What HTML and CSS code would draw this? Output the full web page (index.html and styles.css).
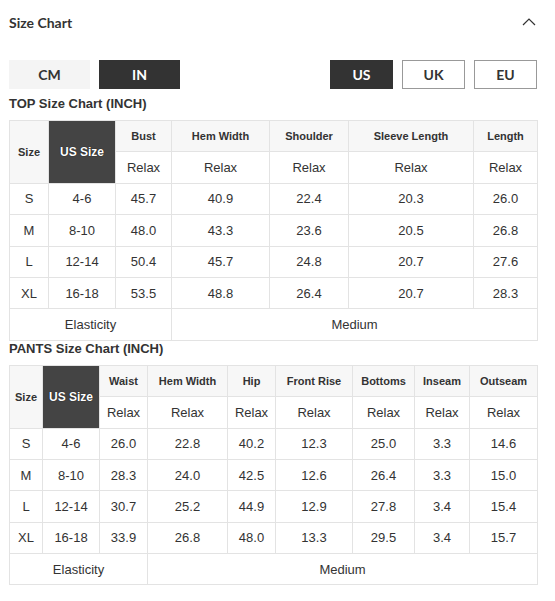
FILE: index.html
```html
<!DOCTYPE html>
<html lang="en">
<head>
    <meta charset="UTF-8">
    <meta name="viewport" content="width=device-width, initial-scale=1.0">
    <title>Size Chart</title>
    <link rel="stylesheet" href="styles.css">
</head>
<body>

<div class="size-chart">
    <div class="chart-header">
        <span class="chart-heading">Size Chart</span>
        <svg class="chevron" width="14" height="8" viewBox="0 0 14 8">
            <polyline points="1,7 7,1 13,7" fill="none" stroke="#333" stroke-width="1.2"/>
        </svg>
    </div>

    <div class="switches">
        <div class="switch-group">
            <button class="unit-btn">CM</button>
            <button class="unit-btn active">IN</button>
        </div>
        <div class="switch-group">
            <button class="region-btn active">US</button>
            <button class="region-btn">UK</button>
            <button class="region-btn">EU</button>
        </div>
    </div>

    <div class="chart-title">TOP Size Chart (INCH)</div>
    <table class="size-table">
        <colgroup>
            <col style="width: 39px"><col style="width: 67px"><col style="width: 56px"><col style="width: 98px">
            <col style="width: 79px"><col style="width: 125px"><col style="width: 64px">
        </colgroup>
        <tr class="head">
            <th rowspan="2">Size</th>
            <th rowspan="2" class="region-head">US Size</th>
            <th>Bust</th>
            <th>Hem Width</th>
            <th>Shoulder</th>
            <th>Sleeve Length</th>
            <th>Length</th>
        </tr>
        <tr>
            <td>Relax</td><td>Relax</td><td>Relax</td><td>Relax</td><td>Relax</td>
        </tr>
        <tr><td>S</td><td>4-6</td><td>45.7</td><td>40.9</td><td>22.4</td><td>20.3</td><td>26.0</td></tr>
        <tr><td>M</td><td>8-10</td><td>48.0</td><td>43.3</td><td>23.6</td><td>20.5</td><td>26.8</td></tr>
        <tr><td>L</td><td>12-14</td><td>50.4</td><td>45.7</td><td>24.8</td><td>20.7</td><td>27.6</td></tr>
        <tr><td>XL</td><td>16-18</td><td>53.5</td><td>48.8</td><td>26.4</td><td>20.7</td><td>28.3</td></tr>
        <tr><td colspan="3">Elasticity</td><td colspan="4">Medium</td></tr>
    </table>

    <div class="chart-title">PANTS Size Chart (INCH)</div>
    <table class="size-table">
        <colgroup>
            <col style="width: 33px"><col style="width: 57px"><col style="width: 48px"><col style="width: 80px">
            <col style="width: 48px"><col style="width: 77px"><col style="width: 62px"><col style="width: 55px">
            <col style="width: 68px">
        </colgroup>
        <tr class="head">
            <th rowspan="2">Size</th>
            <th rowspan="2" class="region-head">US Size</th>
            <th>Waist</th>
            <th>Hem Width</th>
            <th>Hip</th>
            <th>Front Rise</th>
            <th>Bottoms</th>
            <th>Inseam</th>
            <th>Outseam</th>
        </tr>
        <tr>
            <td>Relax</td><td>Relax</td><td>Relax</td><td>Relax</td><td>Relax</td><td>Relax</td><td>Relax</td>
        </tr>
        <tr><td>S</td><td>4-6</td><td>26.0</td><td>22.8</td><td>40.2</td><td>12.3</td><td>25.0</td><td>3.3</td><td>14.6</td></tr>
        <tr><td>M</td><td>8-10</td><td>28.3</td><td>24.0</td><td>42.5</td><td>12.6</td><td>26.4</td><td>3.3</td><td>15.0</td></tr>
        <tr><td>L</td><td>12-14</td><td>30.7</td><td>25.2</td><td>44.9</td><td>12.9</td><td>27.8</td><td>3.4</td><td>15.4</td></tr>
        <tr><td>XL</td><td>16-18</td><td>33.9</td><td>26.8</td><td>48.0</td><td>13.3</td><td>29.5</td><td>3.4</td><td>15.7</td></tr>
        <tr><td colspan="3">Elasticity</td><td colspan="6">Medium</td></tr>
    </table>
</div>

</body>
</html>
```

FILE: styles.css
```css
body {
    margin: 0;
    font-family: "Liberation Sans", Arial, sans-serif;
    color: #333;
    background-color: #fff;
}

.size-chart {
    width: 528px;
    margin-left: 9px;
}

.chart-header {
    display: flex;
    justify-content: space-between;
    align-items: center;
    height: 45px;
}

.chart-heading {
    font-family: Lato, sans-serif;
    font-size: 14px;
    font-weight: 700;
    color: #333;
}

.chevron {
    display: block;
    margin-right: 1px;
    margin-top: -2px;
}

.switches {
    display: flex;
    justify-content: space-between;
    margin-top: 15px;
    margin-bottom: 7px;
}

.switch-group {
    display: flex;
    gap: 9px;
}

.switches button {
    height: 29px;
    padding: 0;
    font-family: Lato, sans-serif;
    font-size: 14px;
    font-weight: 700;
    color: #333;
    cursor: pointer;
}

.unit-btn {
    width: 81px;
    border: none;
    background-color: #f4f4f4;
}

.region-btn {
    width: 63px;
    border: 1px solid #999;
    background-color: #fff;
}

.switches button.active {
    background-color: #333;
    border-color: #333;
    color: #fff;
}

.chart-title {
    font-size: 13px;
    font-weight: 700;
    line-height: 16px;
    margin-bottom: 8px;
}

.size-table {
    width: 528px;
    table-layout: fixed;
    border-collapse: collapse;
    text-align: center;
}

.size-table tr {
    height: 31.4px;
}

.size-table td,
.size-table th {
    border: 1px solid #e3e3e3;
    padding: 0;
    font-size: 13px;
    font-weight: 400;
}

.size-table th {
    background-color: #f7f7f7;
    font-size: 11px;
    font-weight: 700;
}

.size-table th.region-head {
    background-color: #444;
    color: #fff;
    font-size: 12px;
    text-shadow: 0 0 1px #000;
}
```
